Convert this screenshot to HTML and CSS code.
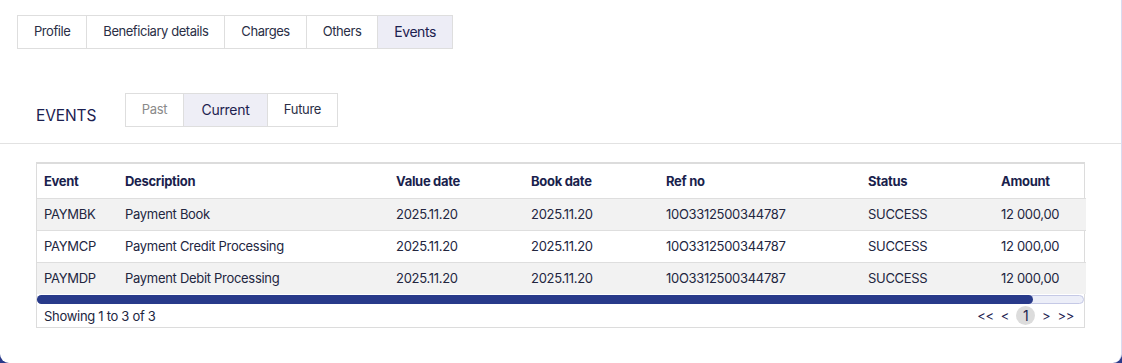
FILE: index.html
```html
<!DOCTYPE html>
<html lang="en">
<head>
    <meta charset="UTF-8">
    <meta name="viewport" content="width=device-width, initial-scale=1.0">
    <title>Events</title>
    <link rel="stylesheet" href="styles.css">
</head>
<body>
    <div class="card">
        <!-- Main tabs -->
        <nav class="tabs">
            <a class="tab">Profile</a>
            <a class="tab">Beneficiary details</a>
            <a class="tab">Charges</a>
            <a class="tab">Others</a>
            <a class="tab active">Events</a>
        </nav>

        <!-- Events header with period switch -->
        <div class="events-head">
            <h2>EVENTS</h2>
            <div class="period">
                <a class="period-item muted">Past</a>
                <a class="period-item active">Current</a>
                <a class="period-item">Future</a>
            </div>
        </div>

        <div class="table-wrap">
            <div class="grid">
                <table>
                    <thead>
                        <tr>
                            <th class="c-event">Event</th>
                            <th class="c-desc">Description</th>
                            <th class="c-date">Value date</th>
                            <th class="c-date">Book date</th>
                            <th class="c-ref">Ref no</th>
                            <th class="c-status">Status</th>
                            <th class="c-amount">Amount</th>
                        </tr>
                    </thead>
                    <tbody>
                        <tr>
                            <td>PAYMBK</td>
                            <td>Payment Book</td>
                            <td>2025.11.20</td>
                            <td>2025.11.20</td>
                            <td>10O3312500344787</td>
                            <td>SUCCESS</td>
                            <td>12 000,00</td>
                        </tr>
                        <tr>
                            <td>PAYMCP</td>
                            <td>Payment Credit Processing</td>
                            <td>2025.11.20</td>
                            <td>2025.11.20</td>
                            <td>10O3312500344787</td>
                            <td>SUCCESS</td>
                            <td>12 000,00</td>
                        </tr>
                        <tr>
                            <td>PAYMDP</td>
                            <td>Payment Debit Processing</td>
                            <td>2025.11.20</td>
                            <td>2025.11.20</td>
                            <td>10O3312500344787</td>
                            <td>SUCCESS</td>
                            <td>12 000,00</td>
                        </tr>
                    </tbody>
                </table>
                <div class="scrollbar"><div class="thumb"></div></div>
                <div class="grid-foot">
                    <span>Showing 1 to 3 of 3</span>
                    <div class="pager">
                        <span>&lt;&lt;</span>
                        <span>&lt;</span>
                        <span class="page current">1</span>
                        <span>&gt;</span>
                        <span>&gt;&gt;</span>
                    </div>
                </div>
            </div>
        </div>
    </div>
</body>
</html>
```

FILE: styles.css
```css
* {
    margin: 0;
    padding: 0;
    box-sizing: border-box;
    font-family: 'Inter', 'Liberation Sans', sans-serif;
}

html, body {
    height: 100%;
}

body {
    background-color: #2a3a8a;
    color: #1c2150;
    overflow: hidden;
}

.card {
    width: 1122px;
    height: 363px;
    background-color: #fff;
    border-right: 1px solid #d9dbf0;
    border-radius: 0 0 9px 9px;
    padding-top: 15px;
}

.tabs {
    display: flex;
    margin-left: 17px;
}

.tab {
    height: 34px;
    padding: 0 16px 2px 16px;
    display: flex;
    align-items: center;
    font-size: 13px;
    letter-spacing: -0.45px;
    color: #2a2e45;
    border: 1px solid #dedede;
    border-left: none;
}

.tab:first-child {
    border-left: 1px solid #dedede;
}

.tab.active {
    background-color: #ededf6;
    color: #1c2150;
    font-size: 14px;
    padding-top: 1px;
}

.events-head {
    display: flex;
    align-items: center;
    padding: 44px 0 16px 36px;
    border-bottom: 1px solid #e2e2e2;
}

.events-head h2 {
    font-size: 15.5px;
    font-weight: 400;
    letter-spacing: -0.1px;
    color: #1c2150;
    width: 89px;
    margin-top: 10px;
}

.period {
    display: flex;
}

.period-item {
    height: 34px;
    display: flex;
    align-items: center;
    justify-content: center;
    padding-bottom: 2px;
    font-size: 13px;
    letter-spacing: -0.3px;
    color: #2a2e45;
    border: 1px solid #dedede;
    border-left: none;
    width: 70px;
}

.period-item:first-child {
    border-left: 1px solid #dedede;
    width: 59px;
}

.period-item.muted {
    color: #8a8a8a;
}

.period-item.active {
    background-color: #eeeef6;
    color: #1c2150;
    font-size: 14px;
    width: 84px;
}

.table-wrap {
    padding: 18px 36px 0 36px;
}

.grid {
    width: 1049px;
    border: 1px solid #dcdcdc;
    border-top: 2px solid #dcdcdc;
}

table {
    width: 100%;
    border-collapse: collapse;
    table-layout: fixed;
}

th, td {
    text-align: left;
    font-size: 13px;
    letter-spacing: -0.3px;
    padding: 0 7px;
    white-space: nowrap;
}

th {
    height: 34px;
    font-weight: 700;
    color: #1a1f4d;
}

td {
    height: 32px;
    padding-bottom: 1px;
    color: #22263f;
    border-top: 1px solid #dedede;
}

tbody tr:nth-child(odd) {
    background-color: #f2f2f2;
}

.c-event { width: 81px; }
.c-desc { width: 271px; }
.c-date { width: 135px; }
.c-ref { width: 202px; }
.c-status { width: 133px; }
.c-amount { width: 92px; }

.scrollbar {
    height: 9px;
    margin-top: 1px;
    background-color: #eceef8;
    border: 1px solid #c5c9e6;
    border-radius: 5px;
}

.thumb {
    width: 996px;
    height: 9px;
    margin-top: -1px;
    margin-left: -1px;
    background-color: #283a8a;
    border-radius: 5px;
}

.grid-foot {
    display: flex;
    justify-content: space-between;
    align-items: center;
    height: 23px;
    padding: 0 10px 0 7px;
    font-size: 13px;
    letter-spacing: -0.3px;
    color: #22263f;
}

.pager {
    display: flex;
    align-items: center;
    gap: 7px;
    font-size: 13px;
    color: #1c2150;
}

.page {
    width: 19px;
    height: 19px;
    border-radius: 50%;
    display: flex;
    align-items: center;
    justify-content: center;
    font-size: 14px;
}

.page.current {
    background-color: #dcdcdc;
}
```
